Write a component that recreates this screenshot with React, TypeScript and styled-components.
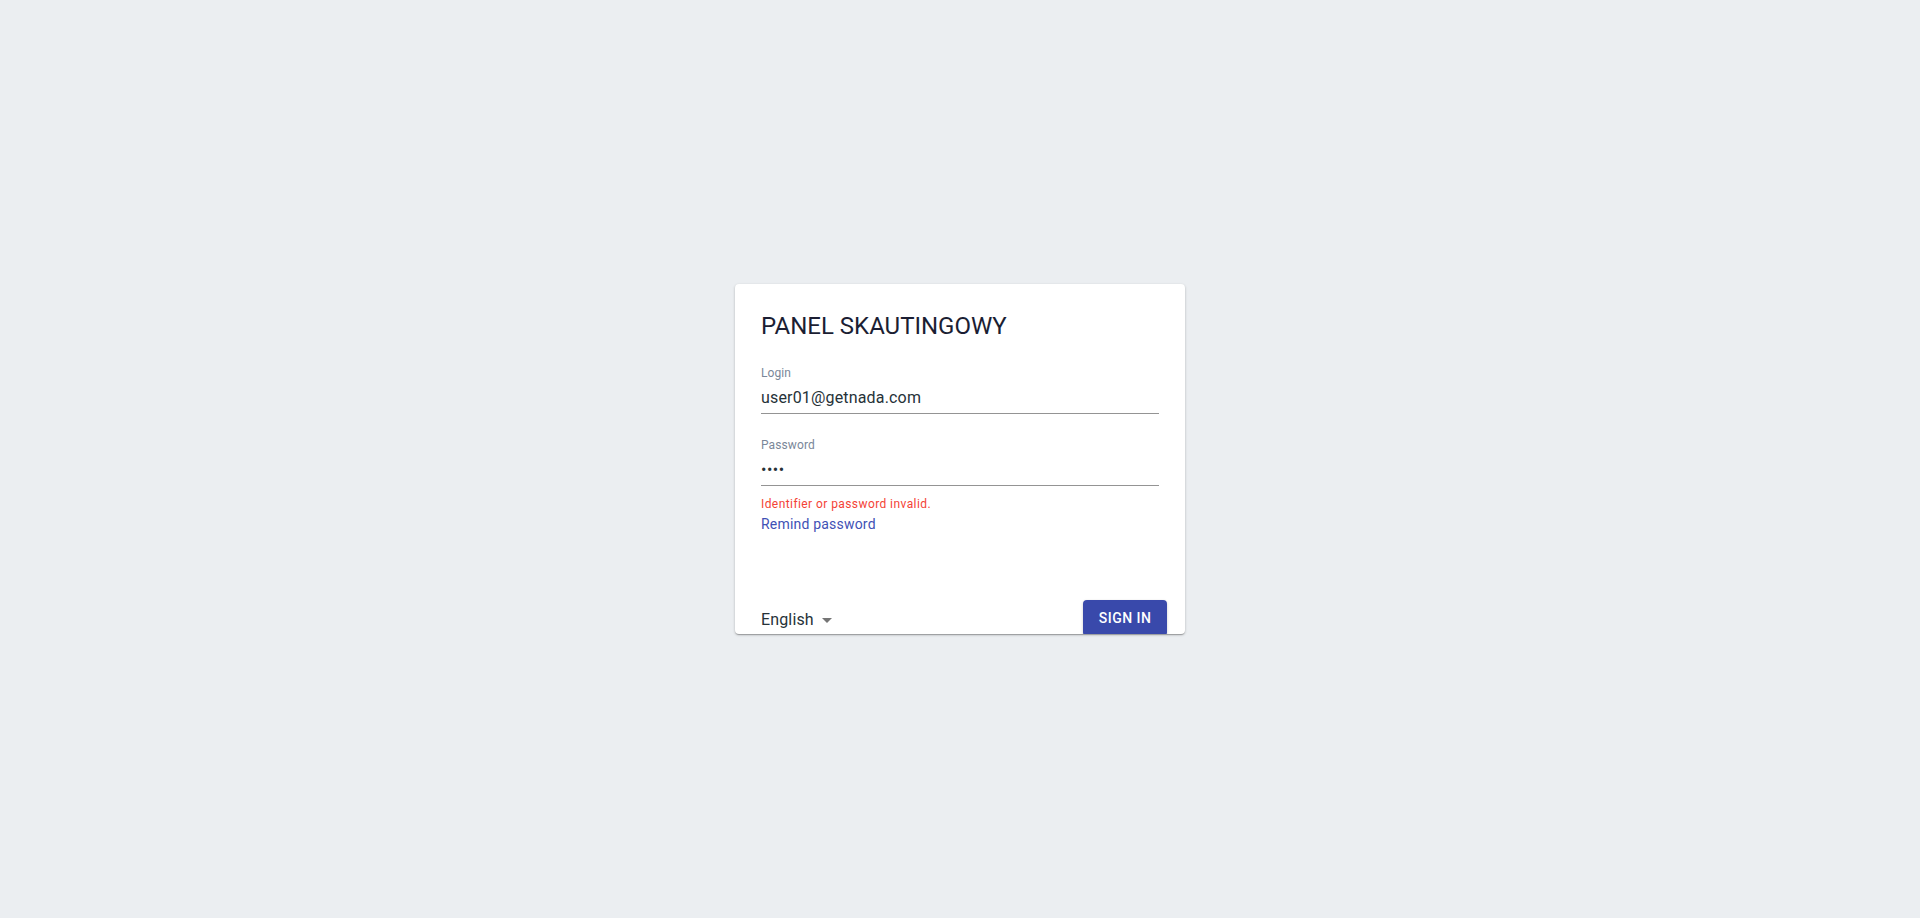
import React from "react";
import styled, { createGlobalStyle } from "styled-components";

const GlobalStyle = createGlobalStyle`
  html, body { margin: 0; padding: 0; height: 100%; }
  body {
    background: #ebeef1;
    font-family: Roboto, "Liberation Sans", Arial, sans-serif;
  }
  #root { height: 100%; }
`;

const Page = styled.div`
  height: 918px;
  display: flex;
  align-items: center;
  justify-content: center;
`;

const Card = styled.form`
  box-sizing: border-box;
  width: 450px;
  height: 350px;
  background: #ffffff;
  border-radius: 4px;
  box-shadow: 0 1px 3px rgba(0, 0, 0, 0.2), 0 1px 1px rgba(0, 0, 0, 0.14),
    0 2px 1px -1px rgba(0, 0, 0, 0.12);
  padding: 26px 26px 0 26px;
  display: flex;
  flex-direction: column;
  overflow: hidden;
`;

const Title = styled.h1`
  margin: 0 0 23px 0;
  font-size: 24px;
  line-height: 32px;
  font-weight: 400;
  color: #1b1e33;
`;

const Field = styled.label<{ $gap?: number }>`
  display: flex;
  flex-direction: column;
  margin-bottom: ${(p) => p.$gap ?? 0}px;
`;

const FieldLabel = styled.span`
  font-size: 12px;
  line-height: 16px;
  color: #7a8799;
  letter-spacing: 0.1px;
  margin-bottom: 5px;
`;

const Input = styled.input<{ $dots?: boolean }>`
  box-sizing: content-box;
  border: 0;
  border-bottom: 1px solid #949494;
  outline: none;
  padding: 0 0 3px 0;
  margin: 0;
  height: 24px;
  font-family: Roboto, "Liberation Sans", Arial, sans-serif;
  font-size: 16px;
  line-height: 24px;
  color: #263238;
  background: transparent;
  letter-spacing: ${(p) => (p.$dots ? "0.5px" : "0.17px")};
`;

const ErrorText = styled.div`
  margin-top: 10px;
  font-size: 12px;
  line-height: 16px;
  color: #f44336;
  letter-spacing: 0.42px;
`;

const Link = styled.a`
  margin-top: 2px;
  font-size: 14px;
  line-height: 20px;
  color: #3f51b5;
  letter-spacing: 0.2px;
  text-decoration: none;
  align-self: flex-start;
  cursor: pointer;
`;

const Footer = styled.div`
  margin-top: auto;
  margin-bottom: -2px;
  margin-right: -8px;
  display: flex;
  align-items: center;
  justify-content: space-between;
  height: 36px;
`;

const LangSelect = styled.button`
  display: flex;
  align-items: center;
  gap: 8px;
  border: 0;
  background: transparent;
  padding: 0;
  margin-top: 3px;
  font-family: Roboto, "Liberation Sans", Arial, sans-serif;
  font-size: 16px;
  line-height: 24px;
  letter-spacing: 0.15px;
  color: #263238;
  cursor: pointer;
`;

const Caret = styled.span`
  width: 0;
  height: 0;
  border-left: 5px solid transparent;
  border-right: 5px solid transparent;
  border-top: 5px solid #757575;
  margin-top: 1px;
`;

const SignIn = styled.button`
  height: 36px;
  padding: 0 15.5px;
  border: 0;
  border-radius: 4px;
  background: #3949ab;
  color: #ffffff;
  font-family: Roboto, "Liberation Sans", Arial, sans-serif;
  font-size: 14px;
  font-weight: 500;
  letter-spacing: 0.5px;
  text-transform: uppercase;
  cursor: pointer;
  box-shadow: 0 1px 3px rgba(0, 0, 0, 0.2);
`;

export default function App() {
  return (
    <>
      <GlobalStyle />
      <Page>
        <Card onSubmit={(e) => e.preventDefault()}>
          <Title>PANEL SKAUTINGOWY</Title>
          <Field $gap={23}>
            <FieldLabel>Login</FieldLabel>
            <Input type="text" defaultValue="user01@getnada.com" />
          </Field>
          <Field>
            <FieldLabel>Password</FieldLabel>
            <Input type="password" defaultValue="abcd" $dots />
          </Field>
          <ErrorText>Identifier or password invalid.</ErrorText>
          <Link>Remind password</Link>
          <Footer>
            <LangSelect type="button">
              English
              <Caret />
            </LangSelect>
            <SignIn type="submit">Sign in</SignIn>
          </Footer>
        </Card>
      </Page>
    </>
  );
}
